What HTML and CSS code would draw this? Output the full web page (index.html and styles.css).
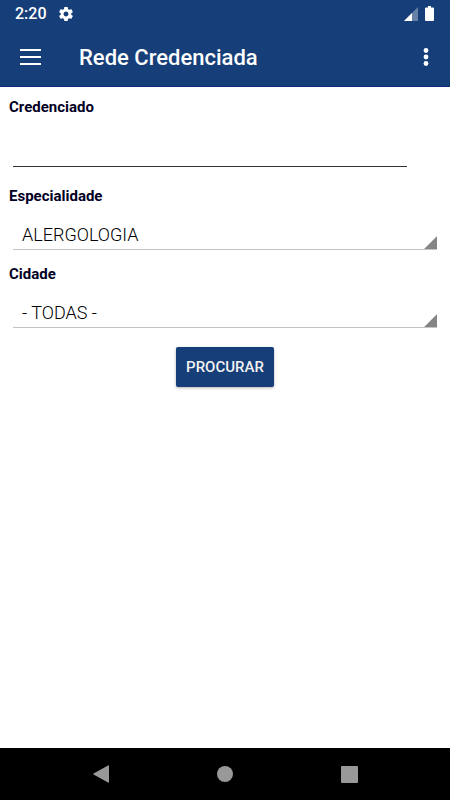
FILE: index.html
```html
<!DOCTYPE html>
<html lang="pt-BR">
<head>
    <meta charset="UTF-8">
    <meta name="viewport" content="width=device-width, initial-scale=1.0">
    <title>Rede Credenciada</title>
    <link rel="stylesheet" href="styles.css">
</head>
<body>
    <header class="header">
        <div class="status-bar">
            <span class="clock">2:20</span>
            <svg class="gear" width="14" height="14" viewBox="2 2 20 20" fill="#fff"><path d="M19.43 12.98c.04-.32.07-.64.07-.98s-.03-.66-.07-.98l2.11-1.65c.19-.15.24-.42.12-.64l-2-3.46c-.12-.22-.39-.3-.61-.22l-2.49 1c-.52-.4-1.08-.73-1.69-.98l-.38-2.65C14.46 2.18 14.25 2 14 2h-4c-.25 0-.46.18-.49.42l-.38 2.65c-.61.25-1.17.59-1.69.98l-2.49-1c-.23-.09-.49 0-.61.22l-2 3.46c-.13.22-.07.49.12.64l2.11 1.65c-.04.32-.07.65-.07.98s.03.66.07.98l-2.11 1.65c-.19.15-.24.42-.12.64l2 3.46c.12.22.39.3.61.22l2.49-1c.52.4 1.08.73 1.69.98l.38 2.65c.03.24.24.42.49.42h4c.25 0 .46-.18.49-.42l.38-2.65c.61-.25 1.17-.59 1.69-.98l2.49 1c.23.09.49 0 .61-.22l2-3.46c.12-.22.07-.49-.12-.64l-2.11-1.65zM12 15.5c-1.93 0-3.5-1.57-3.5-3.5s1.57-3.5 3.5-3.5 3.5 1.57 3.5 3.5-1.57 3.5-3.5 3.5z"/></svg>
            <div class="status-icons">
                <svg width="14" height="14" viewBox="0 0 14 14" fill="#fff"><path d="M0 14L14 0V14z" opacity=".35"/><path d="M0 14L8 6V14z"/></svg>
                <svg width="9" height="15" viewBox="0 0 9 15" fill="#fff"><path d="M3 0h3v1.500h2a1 1 0 0 1 1 1V14a1 1 0 0 1-1 1H1a1 1 0 0 1-1-1V2.500a1 1 0 0 1 1-1h2z"/></svg>
            </div>
        </div>
        <div class="app-bar">
            <button class="icon-button" type="button" aria-label="Menu">
                <svg width="21" height="16" viewBox="0 0 21 16" fill="#fff"><path d="M0 0h21v2H0zM0 7h21v2H0zM0 14h21v2H0z"/></svg>
            </button>
            <h1 class="title">Rede Credenciada</h1>
            <button class="icon-button" type="button" aria-label="Mais opções">
                <svg width="6" height="20" viewBox="0 0 6 20" fill="#fff"><circle cx="3" cy="3.500" r="2.400"/><circle cx="3" cy="10" r="2.400"/><circle cx="3" cy="16.500" r="2.400"/></svg>
            </button>
        </div>
    </header>

    <form class="search-form">
        <label for="credenciado">Credenciado</label>
        <input class="text-field" type="text" id="credenciado">

        <label for="especialidade">Especialidade</label>
        <select class="spinner" id="especialidade">
            <option>ALERGOLOGIA</option>
        </select>

        <label for="cidade">Cidade</label>
        <select class="spinner" id="cidade">
            <option>- TODAS -</option>
        </select>

        <button class="search-button" type="button">PROCURAR</button>
    </form>

    <nav class="nav-bar">
        <button class="icon-button" type="button" aria-label="Voltar">
            <svg width="16" height="18" viewBox="0 0 16 18" fill="#999"><path d="M15 0.500Q16 0 16 1V17Q16 18 15 17.500L0.500 9.600Q0 9 0.500 8.400z"/></svg>
        </button>
        <button class="icon-button" type="button" aria-label="Início">
            <svg width="16" height="16" viewBox="0 0 16 16" fill="#999"><circle cx="8" cy="8" r="8"/></svg>
        </button>
        <button class="icon-button" type="button" aria-label="Recentes">
            <svg width="17" height="17" viewBox="0 0 17 17" fill="#999"><rect width="17" height="17" rx="1"/></svg>
        </button>
    </nav>
</body>
</html>
```

FILE: styles.css
```css
* {
    box-sizing: border-box;
}

body {
    font-family: Roboto, sans-serif;
    display: flex;
    flex-direction: column;
    min-height: 100vh;
    margin: 0;
    background: #fff;
    color: #000;
}

button {
    font-family: inherit;
    border: none;
    cursor: pointer;
}

.header {
    background: #163e78;
    color: #fff;
    border-bottom: 1px solid #0b2a80;
}

.status-bar {
    display: flex;
    align-items: center;
    height: 27px;
    padding: 0 16px 0 15px;
}

.clock {
    font-size: 16px;
    font-weight: 500;
}

.gear {
    margin-left: 12px;
}

.status-icons {
    display: flex;
    align-items: center;
    gap: 7px;
    margin-left: auto;
}

.app-bar {
    display: flex;
    align-items: center;
    height: 59px;
    padding: 0 13px 0 10px;
}

.icon-button {
    display: flex;
    align-items: center;
    justify-content: center;
    min-width: 22px;
    height: 40px;
    padding: 0;
    background: none;
}

.app-bar .icon-button:first-child {
    width: 41px;
}

.title {
    flex: 1;
    margin: 0 0 0 28px;
    padding-top: 2px;
    font-size: 22px;
    font-weight: 500;
    line-height: 28px;
}

.search-form {
    display: flex;
    flex: 1;
    flex-direction: column;
    padding: 10px 9px 20px;
}

.search-form label {
    color: #020024;
    font-size: 15px;
    font-weight: 700;
    line-height: 20px;
}

.text-field {
    height: 50px;
    margin: 0 34px 19px 4px;
    padding: 12px 9px 0;
    border: none;
    border-bottom: 1px solid #333;
    outline: none;
    background: none;
    font-family: inherit;
    font-size: 18px;
}

/* Linha inferior com o triângulo no canto direito */
.spinner {
    appearance: none;
    height: 44px;
    margin: 0 4px 14px;
    padding: 13px 20px 0 9px;
    border: none;
    border-bottom: 1px solid #c4c4c4;
    border-radius: 0;
    outline: none;
    background: linear-gradient(135deg, transparent 48%, #858585 53%) no-repeat right bottom / 13px 13px;
    color: #000;
    font-family: inherit;
    font-size: 18px;
    font-weight: 300;
}

.search-button {
    align-self: center;
    height: 40px;
    margin-top: 5px;
    padding: 0 10px;
    border-radius: 2px;
    background: #163e78;
    box-shadow: 0 1px 3px rgba(0, 0, 0, 0.3);
    color: #f2f2f2;
    font-size: 15px;
    font-weight: 500;
}

.nav-bar {
    display: flex;
    align-items: center;
    justify-content: space-between;
    height: 52px;
    padding: 0 20%;
    background: #000;
}
```
